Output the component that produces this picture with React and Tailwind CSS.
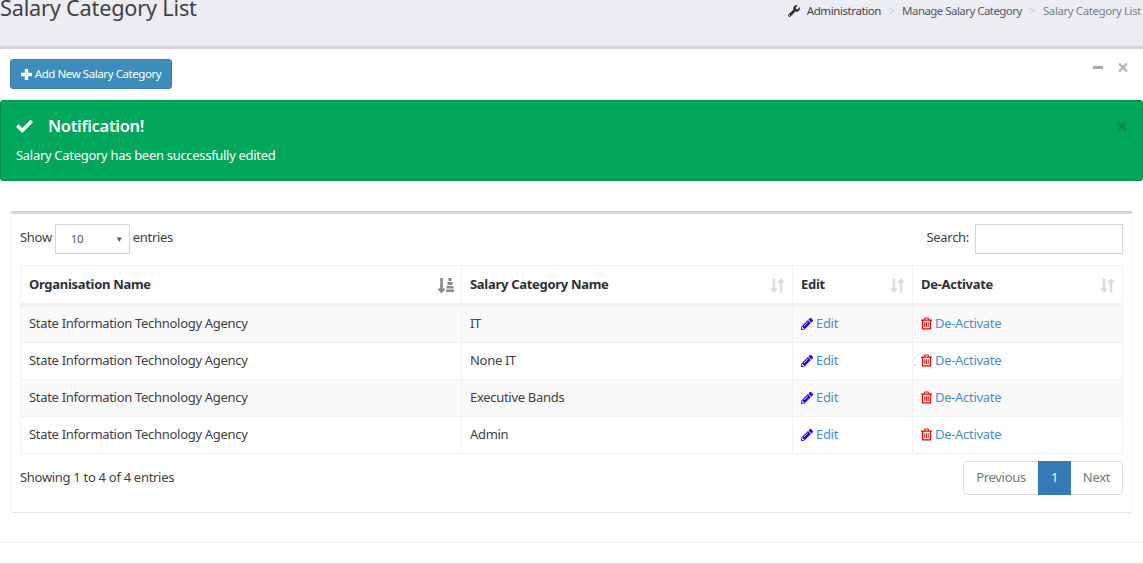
import React from 'react'
import { FaTimes, FaWrench, FaPencilAlt, FaLongArrowAltDown, FaLongArrowAltUp } from 'react-icons/fa'

const rows = [
  ['State Information Technology Agency', 'IT'],
  ['State Information Technology Agency', 'None IT'],
  ['State Information Technology Agency', 'Executive Bands'],
  ['State Information Technology Agency', 'Admin'],
]

function SortIcon({ active }) {
  if (active) {
    return (
      <span className="flex items-center text-[#8a8a8a]">
        <FaLongArrowAltDown className="h-[17px] w-[9px]" />
        <svg width="8" height="14" viewBox="0 0 8 14" fill="currentColor">
          <rect x="2.5" y="0" width="3" height="3" />
          <rect x="1.5" y="4" width="5" height="3" />
          <rect x="0.5" y="8" width="7" height="2.5" />
          <rect x="0" y="11.5" width="8" height="2.5" />
        </svg>
      </span>
    )
  }
  return (
    <span className="flex items-center text-[#dcdcdc]">
      <FaLongArrowAltDown className="h-[17px] w-[8px]" />
      <FaLongArrowAltUp className="-ml-[1px] h-[17px] w-[8px]" />
    </span>
  )
}

function TrashIcon() {
  return (
    <svg width="11" height="13" viewBox="0 0 12 13" className="-mt-[1px] shrink-0 text-[#f00000]" fill="currentColor">
      <path fillRule="evenodd" d="M4 0h4l1 2h3v1.5h-1V13H1V3.5H0V2h3zM4.6 1.1 4.2 2h3.6l-.4-.9zM2.4 3.5v8.2h7.2V3.5zM3.6 5h1v5.2h-1zM5.5 5h1v5.2h-1zM7.4 5h1v5.2h-1z" />
    </svg>
  )
}

function Th({ label, active }) {
  return (
    <th className="h-[39px] border border-b-[3px] border-[#f1f1f1] pl-2 pr-[7px] pt-[1px] text-left font-bold text-[#2f2f33]">
      <div className="flex items-center justify-between">
        <span>{label}</span>
        <SortIcon active={active} />
      </div>
    </th>
  )
}

export default function App() {
  return (
    <div className="h-[564px] overflow-hidden bg-white text-[13px] tracking-[-0.3px] text-[#3f4047] [font-family:'Noto_Sans','Liberation_Sans',sans-serif]">
      {/* page head */}
      <div className="flex h-[49px] items-start justify-between overflow-hidden border-b-[3px] border-[#d2d5df] bg-[#ebedf2]">
        <h1 className="-mt-[7px] text-[21.7px] leading-[30px] tracking-[-0.2px] text-[#3f4047]">Salary Category List</h1>
        <div className="mt-[2px] flex items-center pr-[2px] text-[11.5px] leading-[18px] tracking-[-0.42px]">
          <FaWrench className="mr-[7px] h-[12px] w-[12px] text-[#333]" />
          <span>Administration</span>
          <span className="mx-[7.5px] text-[#c4c5d0]">&gt;</span>
          <span className="tracking-[-0.55px] text-[#575962]">Manage Salary Category</span>
          <span className="mx-[7.5px] text-[#c4c5d0]">&gt;</span>
          <span className="text-[#7b7e8a]">Salary Category List</span>
        </div>
      </div>

      {/* toolbar */}
      <div className="flex h-[51px] items-start justify-between pl-[10px] pr-[15px] pt-[10px]">
        <button className="flex h-[30px] w-[162px] items-center justify-center gap-[3px] rounded-[3px] border border-[#367fa9] bg-[#3c8dbc] text-[11.5px] tracking-[-0.43px] text-white">
          <svg width="11" height="11" viewBox="0 0 11 11" fill="currentColor">
            <path d="M3.8 0h3.4v3.8H11v3.4H7.2V11H3.8V7.2H0V3.8h3.8z" />
          </svg>
          Add New Salary Category
        </button>
        <div className="mt-[2px] flex items-center gap-[15px] text-[#b4b6c4]">
          <span className="h-[3px] w-[10px] bg-[#a6a9b8]" />
          <FaTimes className="h-[13px] w-[10px]" />
        </div>
      </div>

      {/* notification */}
      <div className="h-[81px] rounded-[3px] border border-[#008d4c] bg-[#00a65a] pl-[15px] pr-[15px] pt-[13px] text-white">
        <div className="flex items-center justify-between">
          <div className="flex items-center gap-[15px] text-[16.5px] font-semibold leading-[24px]">
            <svg width="17" height="14" viewBox="0 0 17 14" fill="currentColor">
              <path d="M6.2 14 0 7.8l2.5-2.5 3.7 3.7L14.5 0.7 17 3.2z" />
            </svg>
            Notification!
          </div>
          <FaTimes className="h-[13px] w-[10px] text-[#14844f]" />
        </div>
        <p className="mt-[7px] leading-[20px]">Salary Category has been successfully edited</p>
      </div>

      {/* table card */}
      <div className="mx-[10px] mt-[30px] h-[302px] rounded-[3px] border-x border-b border-t-[3px] border-x-[#f4f4f4] border-b-[#e8e8e8] border-t-[#d2d5df] px-[9px] pt-[10px]">
        <div className="flex h-[30px] items-center justify-between">
          <div className="flex items-center">
            <span className="-mt-[3px]">Show</span>
            <div className="mx-[3px] flex h-[30px] w-[75px] items-center justify-between border border-[#d2d5df] pl-[15px] pr-[6px] text-[11.5px] text-[#4d5a63]">
              <span>10</span>
              <span className="text-[8px] text-[#555]">▼</span>
            </div>
            <span className="-mt-[3px]">entries</span>
          </div>
          <div className="flex items-center gap-[6px]">
            <span className="-mt-[3px]">Search:</span>
            <div className="h-[30px] w-[148px] border border-[#d2d5df]" />
          </div>
        </div>

        <table className="mt-[11px] w-full table-fixed border-collapse">
          <colgroup>
            <col className="w-[441px]" />
            <col className="w-[331px]" />
            <col className="w-[120px]" />
            <col />
          </colgroup>
          <thead>
            <tr>
              <Th label="Organisation Name" active />
              <Th label="Salary Category Name" />
              <Th label="Edit" />
              <Th label="De-Activate" />
            </tr>
          </thead>
          <tbody>
            {rows.map((r, i) => {
              // the thick header border eats into the first row
              const first = i === 0 ? 'h-[38px] pb-[1px]' : 'h-[37px]'
              return (
                <tr key={r[1]} className={i % 2 === 0 ? 'bg-[#f9f9f9]' : 'bg-white'}>
                  <td className={`${first} border border-[#f1f1f1] px-2`}>{r[0]}</td>
                  <td className={`${first} border border-[#f1f1f1] px-2`}>{r[1]}</td>
                  <td className={`${first} border border-[#f1f1f1] px-2`}>
                    <span className="flex items-center gap-[3px] text-[#4a8fc9]">
                      <FaPencilAlt className="h-[12px] w-[12px] text-[#2200ee]" />
                      Edit
                    </span>
                  </td>
                  <td className={`${first} border border-[#f1f1f1] px-2`}>
                    <span className="flex items-center gap-[3px] text-[#4a8fc9]">
                      <TrashIcon />
                      De-Activate
                    </span>
                  </td>
                </tr>
              )
            })}
          </tbody>
        </table>

        <div className="mt-[7px] flex items-start justify-between">
          <span className="mt-[6px] leading-[20px]">Showing 1 to 4 of 4 entries</span>
          <div className="flex h-[34px] items-stretch rounded-[4px] border border-[#ddd] text-[#777]">
            <span className="flex w-[74px] items-center justify-center">Previous</span>
            <span className="-my-px flex w-[33px] items-center justify-center bg-[#337ab7] text-white">1</span>
            <span className="flex w-[51px] items-center justify-center">Next</span>
          </div>
        </div>
      </div>

      {/* footer */}
      <div className="mt-[29px] h-[22px] border-y border-b-[#dddddd] border-t-[#f0f0f0]" />
    </div>
  )
}
